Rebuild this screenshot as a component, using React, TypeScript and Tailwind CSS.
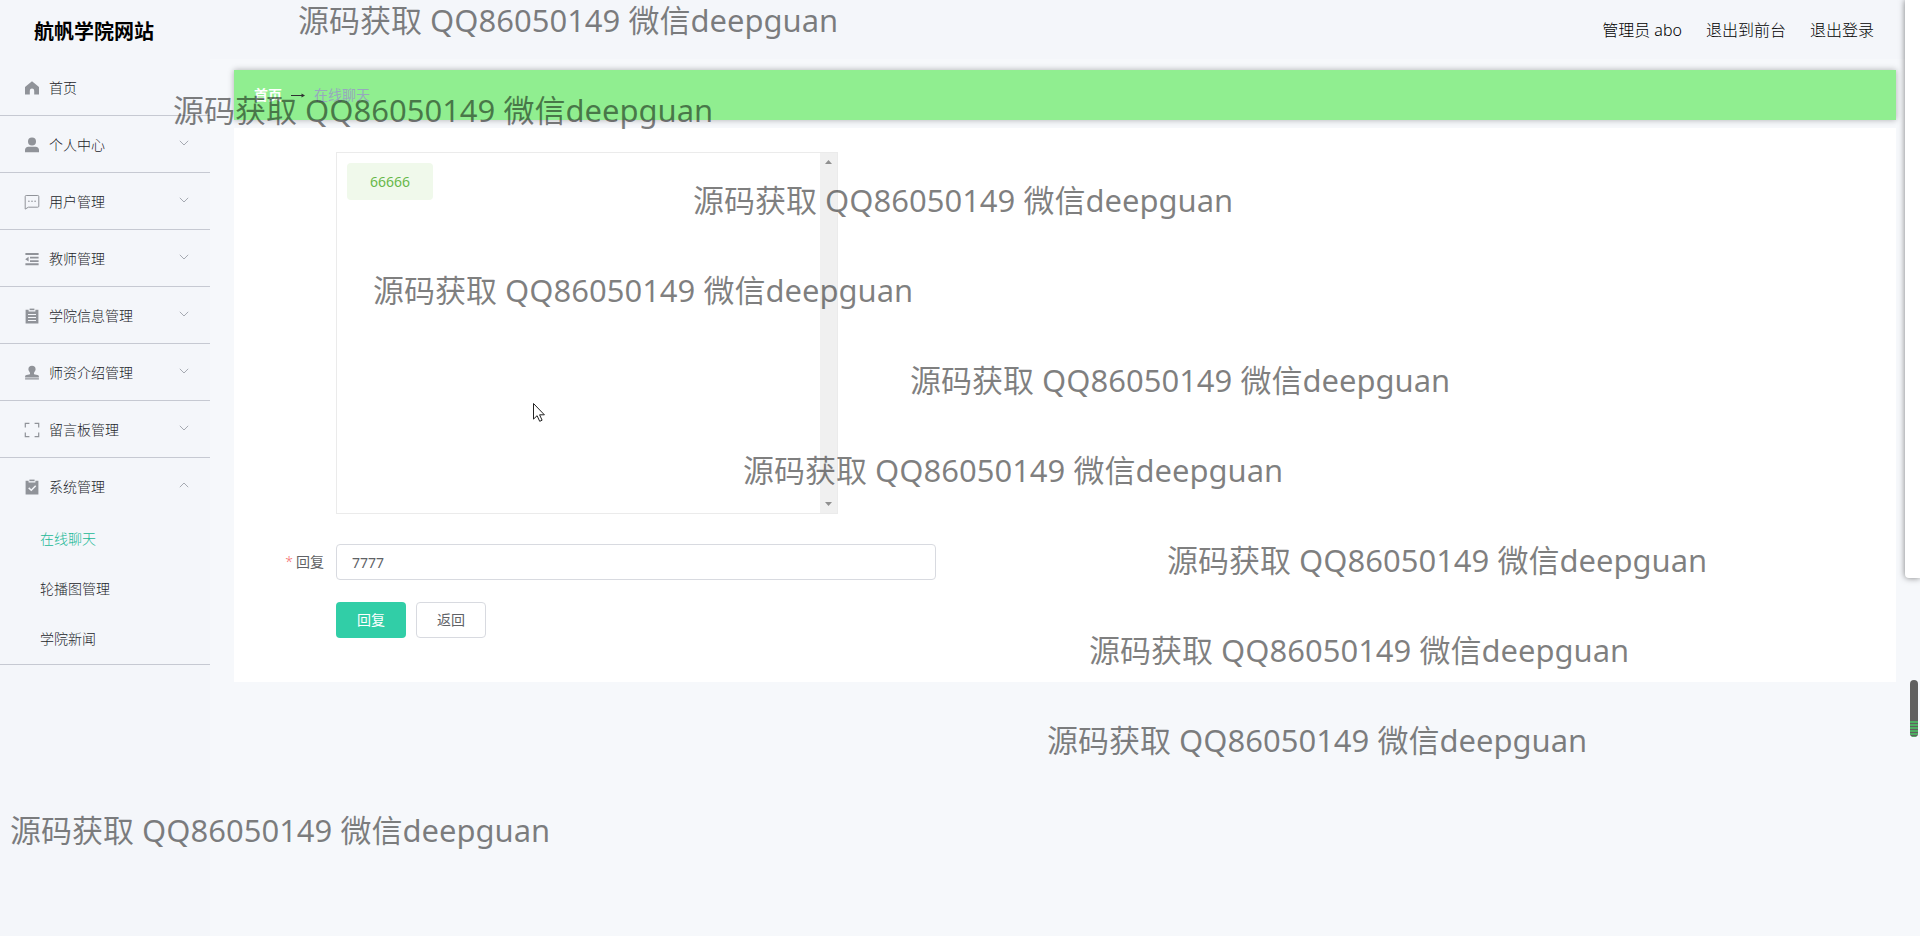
import React, { useState } from 'react';

type IconProps = { children: React.ReactNode };

const Icon: React.FC<IconProps> = ({ children }) => (
    <svg viewBox="0 0 16 16" className="h-4 w-4 fill-[#909399]" aria-hidden="true">
        {children}
    </svg>
);

const HomeIcon = () => (
    <Icon>
        <path d="M8 1.2 15 7v7.6H10.2V10.8a2.2 2.2 0 0 0-4.4 0v3.8H1V7z" />
    </Icon>
);

const UserIcon = () => (
    <Icon>
        <circle cx="8" cy="4.6" r="4" />
        <path d="M1 15.3v-2.2c0-2 1.4-3.4 3.4-3.4h7.2c2 0 3.4 1.4 3.4 3.4v2.2z" />
    </Icon>
);

const ChatIcon = () => (
    <Icon>
        <path d="M2.2 1.5h11.6a1 1 0 0 1 1 1v9.7a1 1 0 0 1-1 1H4.4l-3.2 1.9V2.5a1 1 0 0 1 1-1z" fill="none" stroke="#909399" />
        <circle cx="4.9" cy="7.2" r="0.8" />
        <circle cx="8" cy="7.2" r="0.8" />
        <circle cx="11.1" cy="7.2" r="0.8" />
    </Icon>
);

const FoldIcon = () => (
    <Icon>
        <path d="M1.4 2h13.2v2H1.4zM6 5.8h8.6v1.7H6zM6 9.2h8.6v1.7H6zM1.4 12.2h13.2v2H1.4zM1.2 8.2l3.4-2.4v4.8z" />
    </Icon>
);

const OrderIcon = () => (
    <Icon>
        <path d="M5.6.6h4.8v1.6H5.6z" />
        <path fillRule="evenodd" d="M1.6 1.8h3v1.6h6.8V1.8h3v13.6H1.6zM4 6v1.1h8V6zm0 3v1.1h8V9zm0 3v1.1h8V12z" />
    </Icon>
);

const CustomIcon = () => (
    <Icon>
        <path d="M8 .8a3.6 3.6 0 0 1 3.6 3.6c0 1.6-1.7 2.6-1.7 4.2 0 .6.4.9 1 1l2.6.4c.9.2 1.4.8 1.4 1.6v.8H1.1v-.8c0-.8.5-1.4 1.4-1.6l2.6-.4c.6-.1 1-.4 1-1 0-1.6-1.7-2.6-1.7-4.2A3.6 3.6 0 0 1 8 .8zM1.1 13.3h13.8v1.3H1.1z" />
    </Icon>
);

const FullScreenIcon = () => (
    <Icon>
        <path d="M1.3 5.4V1.3h4.1M10.6 1.3h4.1v4.1M14.7 10.6v4.1h-4.1M5.4 14.7H1.3v-4.1" fill="none" stroke="#909399" strokeWidth="1.2" />
    </Icon>
);

const ClaimIcon = () => (
    <Icon>
        <path d="M5.4.6h5.2v1.6H5.4z" />
        <path d="M1.6 1.8h3v1.6h6.8V1.8h3v13.6H1.6z" />
        <path d="m4.7 8.9 2.6 2.4 4.4-4.5" fill="none" stroke="#f4f6fa" strokeWidth="1.5" />
    </Icon>
);

const Chevron: React.FC<{ open?: boolean }> = ({ open }) => (
    <svg viewBox="0 0 12 12" className={`mb-1 ml-auto h-3 w-3 ${open ? 'rotate-180' : ''}`} aria-hidden="true">
        <path d="m1.8 3.8 4.2 4.2 4.2-4.2" fill="none" stroke="#a6aab2" />
    </svg>
);

const menus = [
    { label: '个人中心', icon: <UserIcon /> },
    { label: '用户管理', icon: <ChatIcon /> },
    { label: '教师管理', icon: <FoldIcon /> },
    { label: '学院信息管理', icon: <OrderIcon /> },
    { label: '师资介绍管理', icon: <CustomIcon /> },
    { label: '留言板管理', icon: <FullScreenIcon /> },
];

// One floating line of the watermark layer per entry
const marks = [
    'left-[298px] -top-0.5',
    'left-[173px] top-[88px]',
    'left-[693px] top-[178px]',
    'left-[373px] top-[268px]',
    'left-[910px] top-[358px]',
    'left-[743px] top-[448px]',
    'left-[1167px] top-[538px]',
    'left-[1089px] top-[628px]',
    'left-[1047px] top-[718px]',
    'left-[10px] top-[808px]',
];

const itemClass = 'flex h-14 w-full items-center gap-[5px] px-5 pt-0.5 text-left';

const Sidebar = () => (
    <nav className="w-[210px] shrink-0 bg-[#f4f6fa] text-sm font-light text-[#222429]">
        <div className="border-b border-[#c6c9d2]">
            <a href="#home" className={itemClass}>
                <span className="flex w-6 justify-center"><HomeIcon /></span>
                首页
            </a>
        </div>
        {menus.map(menu => (
            <div key={menu.label} className="border-b border-[#c6c9d2]">
                <button type="button" className={itemClass}>
                    <span className="flex w-6 justify-center">{menu.icon}</span>
                    {menu.label}
                    <Chevron />
                </button>
            </div>
        ))}
        <div className="border-b border-[#c6c9d2]">
            <button type="button" className={itemClass} aria-expanded="true">
                <span className="flex w-6 justify-center"><ClaimIcon /></span>
                系统管理
                <Chevron open />
            </button>
            <a href="#chat" className="flex h-[50px] items-center px-10 text-[#22b896]">在线聊天</a>
            <a href="#banner" className="flex h-[50px] items-center px-10">轮播图管理</a>
            <a href="#news" className="flex h-[50px] items-center px-10">学院新闻</a>
        </div>
    </nav>
);

const ChatWindow = () => (
    <div className="ml-20 flex h-[362px] w-[502px] border border-[#ebebeb]">
        <div className="flex-1 p-2.5">
            <span className="inline-flex h-[37px] w-[86px] items-center justify-center rounded bg-[#f0f9eb] text-sm text-[#67b84a]">66666</span>
        </div>
        <div className="flex w-[17px] flex-col items-center justify-between bg-[#f0f0f0] py-[7px]">
            <svg viewBox="0 0 7 4" className="h-1 w-[7px] fill-[#909090]"><path d="M0 4 3.5 0 7 4z" /></svg>
            <svg viewBox="0 0 7 4" className="h-1 w-[7px] fill-[#909090]"><path d="M0 0h7L3.5 4z" /></svg>
        </div>
    </div>
);

const App: React.FC = () => {
    const [reply, setReply] = useState('7777');

    return (
        <div className="relative flex min-h-screen flex-col overflow-hidden bg-[#f6f8fb] font-['Noto_Sans','Noto_Sans_CJK_SC',sans-serif]">
            <header className="flex h-[59px] items-center justify-between bg-[#f4f6fa] pl-[34px] pr-[46px]">
                <h1 className="pt-1 text-xl font-bold text-black">航帆学院网站</h1>
                <div className="flex gap-6 text-base font-light text-black">
                    <span>管理员 abo</span>
                    <a href="#front">退出到前台</a>
                    <a href="#logout">退出登录</a>
                </div>
            </header>

            <div className="flex flex-1">
                <Sidebar />
                <main className="ml-6 mr-6 mt-[11px] flex-1">
                    <div className="flex h-[50px] items-center gap-2 bg-[#90ee90] px-5 text-sm shadow-[0_0_6px_rgba(0,0,0,0.3)]">
                        <a href="#home" className="font-bold text-white">首页</a>
                        <svg viewBox="0 0 16 8" className="h-2 w-4" aria-hidden="true">
                            <path d="M1 4.5h13" stroke="#303133" />
                            <path d="M11.5 2.5 15 4.5l-3.5 2z" fill="#303133" />
                        </svg>
                        <span className="text-[#97a8be]">在线聊天</span>
                    </div>

                    <form className="mt-2 bg-white px-[22px] pb-11 pt-6" onSubmit={e => e.preventDefault()}>
                        <ChatWindow />
                        <div className="mt-[30px] flex items-center text-sm text-[#606266]">
                            <label htmlFor="reply" className="w-20 pr-3 text-right">
                                <span className="mr-[3px] font-light text-[#f56c6c]">*</span>
                                回复
                            </label>
                            <input
                                id="reply"
                                value={reply}
                                onChange={e => setReply(e.target.value)}
                                className="h-9 w-[600px] rounded border border-[#d8dae0] bg-white px-[15px] text-sm text-[#606266] outline-none"
                            />
                        </div>
                        <div className="ml-20 mt-[22px] flex gap-2.5 text-sm">
                            <button type="submit" className="h-9 w-[70px] rounded bg-[#31cea7] text-white">回复</button>
                            <button type="button" className="h-9 w-[70px] rounded border border-[#d8dae0] bg-white text-[#606266]">返回</button>
                        </div>
                    </form>
                </main>
            </div>

            {/* docked recorder panel and level meter */}
            <div className="absolute right-0 top-0 h-[578px] w-[15px] rounded-bl bg-white shadow-[0_0_6px_rgba(0,0,0,0.5)]" />
            <div className="absolute right-0.5 top-[680px] flex h-[57px] w-2 flex-col justify-end overflow-hidden rounded-full bg-[#606060]">
                <div className="h-4 bg-[repeating-linear-gradient(#4fae63_0_2px,#606060_2px_3px)]" />
            </div>

            <svg viewBox="0 0 14 21" className="absolute left-[532px] top-[402px] h-[21px] w-3.5" aria-hidden="true">
                <path d="M1.5 1.5v15.6l3.6-3.4 2.6 5.6 2.4-1.1-2.5-5.4h4.8z" fill="#fff" stroke="#222" />
            </svg>

            <div className="pointer-events-none absolute inset-0 text-[31px] leading-[45px] text-black/50">
                {marks.map(mark => (
                    <span key={mark} className={`absolute whitespace-nowrap ${mark}`}>源码获取 QQ86050149 微信deepguan</span>
                ))}
            </div>
        </div>
    );
};

export default App;
